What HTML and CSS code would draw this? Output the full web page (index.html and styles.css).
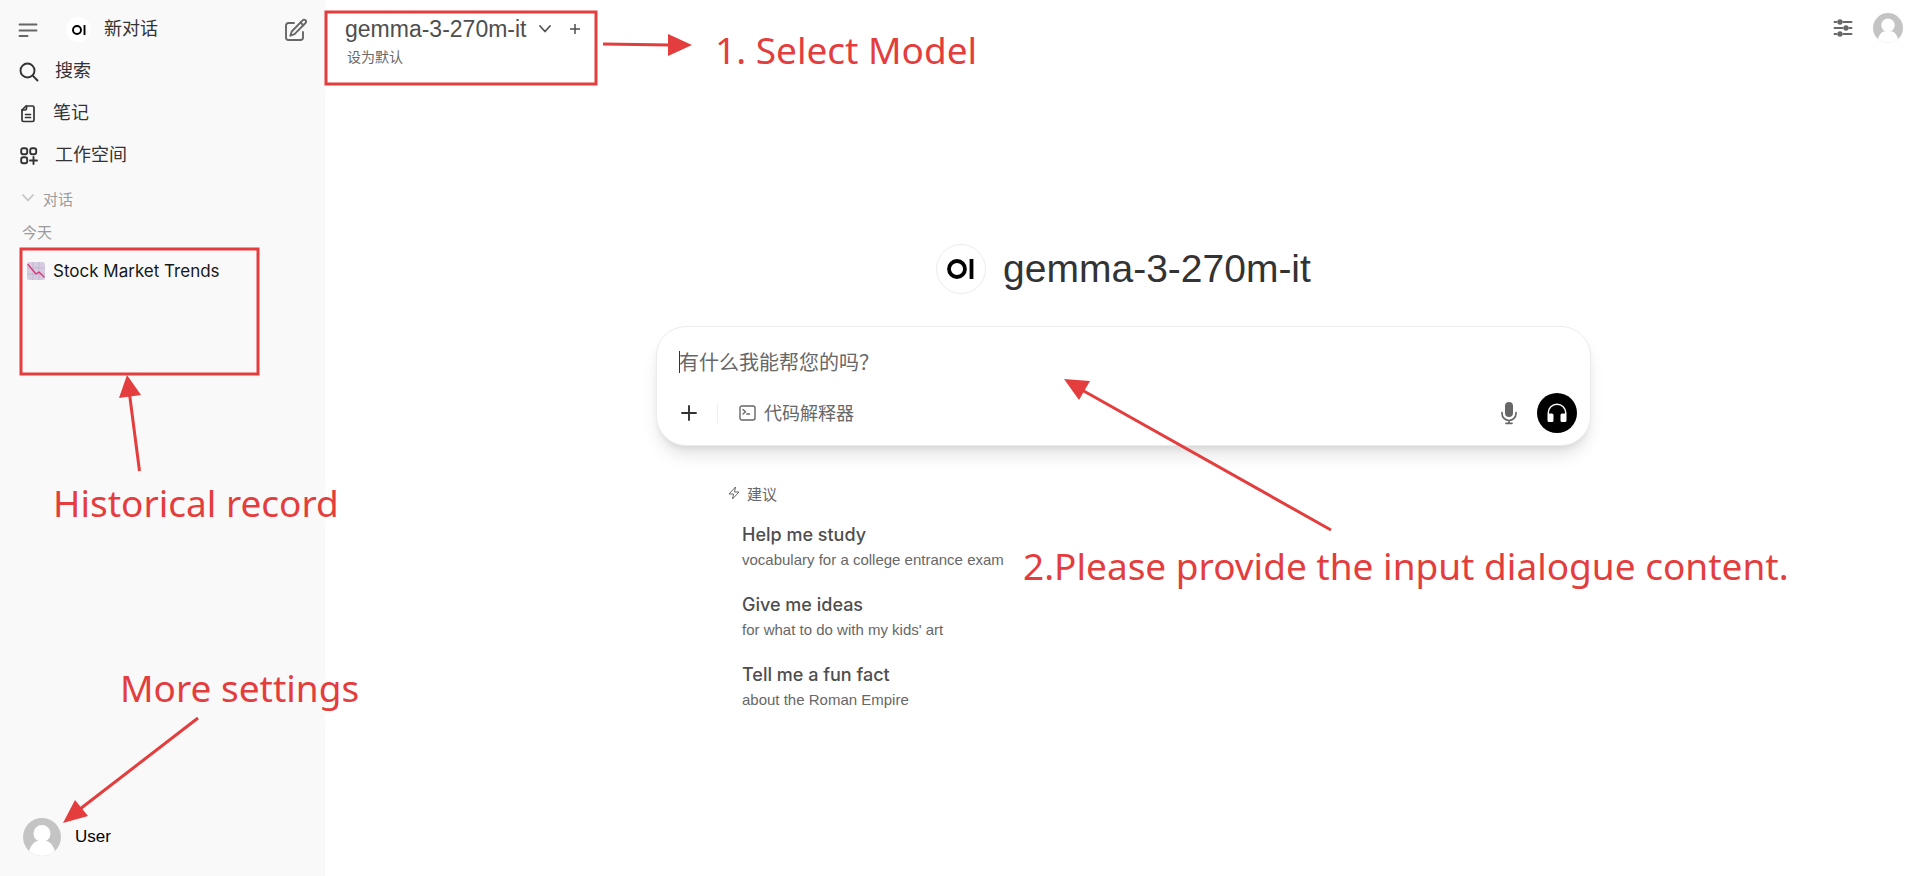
FILE: index.html
```html
<!DOCTYPE html>
<html lang="zh-CN">
<head>
<meta charset="utf-8">
<title>Open WebUI</title>
<link rel="stylesheet" href="styles.css">
</head>
<body>
<div class="app">
  <aside class="sidebar">
    <div class="side-head">
      <button class="icon-btn toggle" aria-label="切换侧边栏">
        <svg width="20" height="20" viewBox="0 0 20 20" fill="none" stroke="#676767" stroke-width="1.9" stroke-linecap="round"><path d="M1.500 4.500H18.500M1.500 10.500H18.500M1.500 16H9.500"/></svg>
      </button>
      <a class="new-chat" href="#">
        <span class="logo logo-small"><svg width="14" height="12" viewBox="0 0 14 12" fill="none" stroke="#000" stroke-width="1.900"><circle cx="5" cy="6" r="4"/><path d="M12.500 1V11"/></svg></span>
        <span>新对话</span>
      </a>
      <button class="icon-btn" aria-label="新建">
        <svg width="24" height="24" viewBox="0 0 24 24" fill="none" stroke="#676767" stroke-width="1.900" stroke-linecap="round" stroke-linejoin="round"><path d="M10 5H4.500A2.500 2.500 0 0 0 2 7.500V19.500A2.500 2.500 0 0 0 4.500 22H16.500A2.500 2.500 0 0 0 19 19.500V14"/><path d="M18.600 2.300A1.900 1.900 0 0 1 21.500 5L10.500 16.200L6.300 17.700L7.700 13.500Z"/><path d="M16.500 4.500L19.300 7.300"/></svg>
      </button>
    </div>
    <nav class="menu">
      <a href="#"><svg width="20" height="20" viewBox="0 0 20 20" fill="none" stroke="#333" stroke-width="1.900" stroke-linecap="round"><circle cx="8.500" cy="8.500" r="7"/><path d="M13.700 13.700L18.500 18.500"/></svg><span>搜索</span></a>
      <a href="#"><svg width="18" height="20" viewBox="0 0 18 20" fill="none" stroke="#333" stroke-width="1.700" stroke-linecap="round" stroke-linejoin="round"><path d="M7 2H13.500Q15 2 15 3.500V16Q15 17.500 13.500 17.500H4.500Q3 17.500 3 16V6Z"/><path d="M7.500 2V4.500Q7.500 6 6 6H3M6.500 10.500H11.500M6.500 13.500H11.500"/></svg><span>笔记</span></a>
      <a href="#"><svg width="20" height="20" viewBox="0 0 20 20" fill="none" stroke="#333" stroke-width="1.900" stroke-linecap="round"><rect x="2.200" y="2.200" width="6" height="6" rx="2"/><rect x="11.200" y="2.200" width="6" height="6" rx="2"/><rect x="2.200" y="11.200" width="6" height="6" rx="2"/><path d="M14.500 11V18M11 14.500H18"/></svg><span>工作空间</span></a>
    </nav>
    <button class="folder">
      <svg width="12" height="8" viewBox="0 0 12 8" fill="none" stroke="#c4c4c4" stroke-width="1.700" stroke-linecap="round" stroke-linejoin="round"><path d="M1 1L6 6.500L11 1"/></svg>
      <span>对话</span>
    </button>
    <div class="day">今天</div>
    <a class="chat" href="#">
      <svg width="18" height="18" viewBox="0 0 18 18" fill="none"><rect width="18" height="18" rx="2.500" fill="#d5cce0"/><path d="M0 6H18M0 12H18M6 0V18M12 0V18" stroke="#c4b8d3"/><path d="M1 2.500L9 12L12 10L17 15" stroke="#e0307a" stroke-width="1.300" stroke-linecap="round" stroke-linejoin="round"/></svg>
      <span>Stock Market Trends</span>
    </a>
    <button class="user">
      <svg width="38" height="38" viewBox="0 0 38 38"><clipPath id="c1"><circle cx="19" cy="19" r="19"/></clipPath><g clip-path="url(#c1)"><rect width="38" height="38" fill="#c4c4c4"/><circle cx="19" cy="15.500" r="8.500" fill="#fff"/><path d="M5 38C6 29 11 23 15 23H23C27 23 32 29 33 38Z" fill="#fff"/></g></svg>
      <span>User</span>
    </button>
  </aside>

  <main class="main">
    <header class="topbar">
      <div class="model">
        <div class="model-row">
          <button class="model-name">gemma-3-270m-it
            <svg width="12" height="8" viewBox="0 0 12 8" fill="none" stroke="#4e4e4e" stroke-width="1.700" stroke-linecap="round" stroke-linejoin="round"><path d="M1 1L6 6.500L11 1"/></svg>
          </button>
          <button class="icon-btn" aria-label="添加模型"><svg width="12" height="12" viewBox="0 0 12 12" stroke="#4e4e4e" stroke-width="1.500"><path d="M6 1V11M1 6H11"/></svg></button>
        </div>
        <button class="default">设为默认</button>
      </div>
      <div class="actions">
        <button class="icon-btn" aria-label="对话设置">
          <svg width="20" height="20" viewBox="0 0 20 20" stroke="#676767" stroke-width="1.900" stroke-linecap="round"><path d="M1.500 4H3.500M10.500 4H18.500M1.500 10H9.500M16.500 10H18.500M1.500 16H3.500M10.500 16H18.500"/><g fill="#676767" stroke="none"><circle cx="7" cy="4" r="2.700"/><circle cx="13" cy="10" r="2.700"/><circle cx="7" cy="16" r="2.700"/></g></svg>
        </button>
        <button class="icon-btn" aria-label="用户菜单">
          <svg width="30" height="30" viewBox="0 0 38 38"><g clip-path="url(#c1)"><rect width="38" height="38" fill="#c4c4c4"/><circle cx="19" cy="15.500" r="8.500" fill="#fff"/><path d="M5 38C6 29 11 23 15 23H23C27 23 32 29 33 38Z" fill="#fff"/></g></svg>
        </button>
      </div>
    </header>

    <section class="center">
      <h1 class="hero">
        <span class="logo logo-large"><svg width="28" height="20" viewBox="0 0 28 20" fill="none" stroke="#000" stroke-width="3.800"><circle cx="10" cy="10" r="8"/><path d="M24.500 0V20"/></svg></span>
        <span>gemma-3-270m-it</span>
      </h1>
      <form class="composer">
        <div class="prompt"><textarea rows="1" aria-label="消息" placeholder="有什么我能帮您的吗？"></textarea></div>
        <div class="tools">
          <button type="button" class="icon-btn add" aria-label="更多"><svg width="16" height="16" viewBox="0 0 16 16" stroke="#333" stroke-width="1.900" stroke-linecap="round"><path d="M8 1V15M1 8H15"/></svg></button>
          <span class="divider"></span>
          <button type="button" class="code">
            <svg width="17" height="16" viewBox="0 0 17 16" fill="none" stroke="#676767" stroke-width="1.400" stroke-linecap="round" stroke-linejoin="round"><rect x="1" y="1" width="15" height="14" rx="2"/><path d="M4 4.500L6.500 6.800L4 9M7.800 9H10.500"/></svg>
            <span>代码解释器</span>
          </button>
          <button type="button" class="icon-btn mic" aria-label="语音输入"><svg width="16" height="24" viewBox="0 0 16 24" fill="none" stroke="#676767" stroke-width="1.700" stroke-linecap="round"><rect x="4" y="1" width="8" height="15" rx="4" fill="#676767" stroke="none"/><path d="M1 11.500V12.500A7 7 0 0 0 15 12.500V11.500M8 19.500V22M5 22.300H11"/></svg></button>
          <button type="button" class="call" aria-label="语音通话"><svg width="20" height="20" viewBox="0 0 20 20" fill="#fff"><path d="M.5 10A9.500 9.500 0 0 1 19.500 10V17.500A1.500 1.500 0 0 1 18 19H15A1.500 1.500 0 0 1 13.500 17.500V12A1.500 1.500 0 0 1 15 10.500H18V10A8 8 0 0 0 2 10V10.500H5A1.500 1.500 0 0 1 6.500 12V17.500A1.500 1.500 0 0 1 5 19H2A1.500 1.500 0 0 1 .5 17.500Z"/></svg></button>
        </div>
      </form>
      <div class="suggestions">
        <div class="suggest-title">
          <svg width="12" height="14" viewBox="0 0 12 14" fill="none" stroke="#676767" stroke-linejoin="round"><path d="M7.500 1L1 8H5.500L4.500 13L11 6H6.500Z"/></svg>
          <span>建议</span>
        </div>
        <button class="suggestion"><strong>Help me study</strong><span>vocabulary for a college entrance exam</span></button>
        <button class="suggestion"><strong>Give me ideas</strong><span>for what to do with my kids' art</span></button>
        <button class="suggestion"><strong>Tell me a fun fact</strong><span>about the Roman Empire</span></button>
      </div>
    </section>
  </main>
</div>

<div class="notes-layer">
  <svg class="marks" fill="none" stroke="#e43d3d" stroke-width="3">
    <rect x="326" y="12" width="270" height="72"/>
    <rect x="21" y="249" width="237" height="125"/>
    <path d="M603 44L670 45M139.500 471L129.500 394M198 718L80 809M1331 530L1082 390"/>
    <g fill="#e43d3d" stroke="none"><path d="M692 45L668 34V56Z"/><path d="M127 375L119 398L141 395Z"/><path d="M63 823L75 800L88 816Z"/><path d="M1064 379L1090 381L1079 400Z"/></g>
  </svg>
  <span class="note note-model">1. Select Model</span>
  <span class="note note-history">Historical record</span>
  <span class="note note-settings">More settings</span>
  <span class="note note-input">2.Please provide the input dialogue content.</span>
</div>
</body>
</html>
```
FILE: styles.css
```css
* { box-sizing: border-box; }

body {
  margin: 0;
  background: #fff;
  color: #171717;
  font-family: "Liberation Sans", "Noto Sans CJK SC", sans-serif;
  font-size: 18px;
}

a { color: inherit; text-decoration: none; }

button {
  border: 0;
  padding: 0;
  background: none;
  color: inherit;
  font: inherit;
  text-align: left;
  cursor: pointer;
}

svg { display: block; flex: none; }

.app { display: flex; min-height: 100vh; }

/* Sidebar */
.sidebar {
  flex: none;
  display: flex;
  flex-direction: column;
  width: 325px;
  background: #f9f9f9;
}

.side-head {
  display: flex;
  align-items: center;
  height: 51px;
  padding: 8px 17px 0 18px;
  color: #333;
}

.new-chat { flex: 1; display: flex; align-items: center; gap: 13px; margin-left: 28px; }
.new-chat span, .menu span { line-height: 24px; padding-bottom: 2px; }

.logo {
  flex: none;
  display: flex;
  align-items: center;
  justify-content: center;
  border-radius: 50%;
  background: #fff;
}

.new-chat .logo-small { width: 25px; height: 25px; padding: 0; }
.logo-large { width: 50px; height: 50px; border: 1px solid #ececec; }

.menu { color: #333; }

.menu a {
  display: flex;
  align-items: center;
  gap: 16px;
  height: 42px;
  padding-left: 19px;
}

.folder {
  display: flex;
  align-items: center;
  gap: 9px;
  height: 42px;
  padding-left: 22px;
  color: #9b9b9b;
  font-size: 15px;
}

.day { padding: 2px 0 0 22px; color: #9b9b9b; font-size: 15px; line-height: 24px; }

.chat {
  display: flex;
  align-items: center;
  gap: 8px;
  height: 52px;
  padding-left: 27px;
  font-family: Inter, sans-serif;
  font-size: 17px;
}

.user {
  display: flex;
  align-items: center;
  gap: 14px;
  margin-top: auto;
  padding: 0 23px 20px;
  color: #000;
  font-size: 17px;
}

/* Top bar */
.main { flex: 1; display: flex; flex-direction: column; min-width: 0; }

.topbar {
  display: flex;
  justify-content: space-between;
  align-items: flex-start;
  padding: 13px 16px 0 20px;
}

.model { padding-top: 1px; }
.model-row { display: flex; align-items: center; gap: 18px; }

.model-name {
  display: flex;
  align-items: center;
  gap: 12px;
  color: #4e4e4e;
  font-size: 23px;
  line-height: 30px;
}

.default { margin-left: 2px; color: #676767; font-size: 14px; line-height: 26px; }
.actions { display: flex; align-items: center; gap: 20px; }

/* Centre column */
.center {
  width: 938px;
  max-width: 100%;
  margin: 174px auto 0;
  padding-left: 3px;
}

.hero {
  display: flex;
  align-items: center;
  justify-content: center;
  gap: 17px;
  margin: 0 0 32px;
  color: #333;
  font-size: 39px;
  font-weight: 400;
  line-height: 50px;
}

.composer {
  padding: 18px 13px 12px 22px;
  border: 1px solid #ececec;
  border-radius: 30px;
  background: #fff;
  box-shadow: 0 12px 18px -4px rgba(0, 0, 0, .12), 0 4px 8px -4px rgba(0, 0, 0, .12);
}

.prompt { position: relative; height: 36px; }

.prompt::before {
  content: "";
  position: absolute;
  top: 6px;
  left: 0;
  width: 1px;
  height: 22px;
  background: #333;
}

.prompt textarea {
  display: block;
  width: 100%;
  height: 36px;
  padding: 0;
  border: 0;
  outline: 0;
  resize: none;
  background: none;
  font: 20px/36px "Liberation Sans", "Noto Sans CJK SC", sans-serif;
}

.prompt textarea::placeholder { color: #676767; }

.tools { display: flex; align-items: center; padding-top: 12px; }
.add { margin-left: 2px; }
.divider { width: 1px; height: 20px; margin: 0 21px 0 20px; background: #f0f0f0; }
.code { display: flex; align-items: center; gap: 8px; color: #676767; }
.code span { padding-bottom: 2px; }
.mic { margin-left: auto; }

.call {
  display: flex;
  align-items: center;
  justify-content: center;
  width: 40px;
  height: 40px;
  margin-left: 20px;
  border-radius: 50%;
  background: #000;
}

/* Suggestions */
.suggestions { padding: 35px 72px 0; color: #676767; font-size: 15px; }

.suggest-title {
  display: flex;
  align-items: center;
  gap: 7px;
  height: 24px;
  margin-bottom: 7px;
}

.suggestion { display: block; width: 100%; height: 70px; padding: 0 14px; }
.suggestion strong { display: block; color: #4e4e4e; font-family: Inter, sans-serif; font-size: 18px; font-weight: 500; line-height: 26px; }
.suggestion span { display: block; line-height: 24px; }

/* Annotations over the interface */
.notes-layer { position: absolute; inset: 0; overflow: hidden; pointer-events: none; }
.marks { position: absolute; inset: 0; width: 100%; height: 100%; }

.note {
  position: absolute;
  color: #e43d3d;
  font-family: "Noto Sans", sans-serif;
  font-size: 37px;
  line-height: 50px;
  white-space: nowrap;
}

.note-model { left: 715px; top: 25px; }
.note-history { left: 53px; top: 478px; }
.note-settings { left: 120px; top: 663px; }
.note-input { left: 1023px; top: 541px; }
```
